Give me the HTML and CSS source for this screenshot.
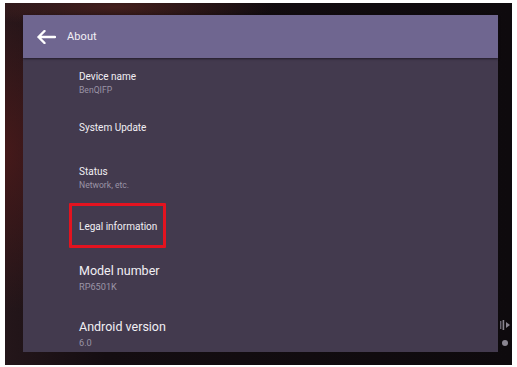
FILE: index.html
```html
<!DOCTYPE html>
<html>
<head>
<meta charset="utf-8">
<link rel="stylesheet" href="styles.css">
</head>
<body>
<div class="bezel">
  <div class="screen">
    <header class="appbar">
      <svg class="back" width="20" height="14" viewBox="0 0 20 14">
        <path d="M19 7H2.5M8.5 1L2.5 7l6 6" fill="none" stroke="#fff" stroke-width="2.4" stroke-linecap="round" stroke-linejoin="round"/>
      </svg>
      <span class="appbar-title">About</span>
    </header>
    <ul class="list">
      <li class="item item-device">
        <div class="title">Device name</div>
        <div class="sub">BenQIFP</div>
      </li>
      <li class="item item-update">
        <div class="title">System Update</div>
      </li>
      <li class="item item-status">
        <div class="title">Status</div>
        <div class="sub">Network, etc.</div>
      </li>
      <li class="item item-legal">
        <div class="title">Legal information</div>
        <span class="highlight"></span>
      </li>
      <li class="item item-model big">
        <div class="title">Model number</div>
        <div class="sub">RP6501K</div>
      </li>
      <li class="item item-android big">
        <div class="title">Android version</div>
        <div class="sub">6.0</div>
      </li>
    </ul>
  </div>
  <span class="side-ctrl">
    <svg width="10" height="12" viewBox="0 0 10 12">
      <rect x="0" y="2" width="1.4" height="8" fill="#6d6873"/>
      <rect x="2.6" y="1" width="1.6" height="10" fill="#8a8590"/>
      <path d="M6 3l4 3-4 3z" fill="#8a8590"/>
    </svg>
  </span>
  <span class="side-dot"></span>
</div>
</body>
</html>
```

FILE: styles.css
```css
* { box-sizing: border-box; }
html, body { margin: 0; padding: 0; }
body {
  background: #ffffff;
  width: 517px;
  height: 367px;
  overflow: hidden;
  font-family: Roboto, "Noto Sans", "Liberation Sans", sans-serif;
}
.bezel {
  position: relative;
  margin: 3px 5px 0 5px;
  height: 362px;
  padding: 12px 14px 13px 18px;
  background:
    radial-gradient(ellipse 90px 160px at 0px 150px, rgba(80, 26, 26, 0.75), rgba(80, 26, 26, 0) 100%),
    radial-gradient(ellipse 160px 20px at 110px 4px, rgba(90, 40, 35, 0.7), rgba(90, 40, 35, 0) 100%),
    linear-gradient(90deg, #24161a 0%, #140d11 20%, #0e0a0d 100%);
}
.screen {
  width: 475px;
  height: 337px;
  background: #433a4e;
  display: flex;
  flex-direction: column;
}
.appbar {
  height: 43px;
  background: #6f6690;
  display: flex;
  align-items: center;
  padding-left: 13px;
  box-shadow: 0 1px 2px rgba(20, 14, 26, 0.7);
  flex: none;
}
.back { display: block; margin-right: 11px; }
.appbar-title {
  color: #f2f0f6;
  font-size: 11px;
  letter-spacing: 0.1px;
}
.list {
  list-style: none;
  margin: 0;
  padding: 0 0 0 56px;
}
.item { position: relative; }
.title {
  color: #f1eff4;
  font-size: 10px;
  line-height: 13px;
}
.sub {
  color: #9b94a6;
  font-size: 8.6px;
  line-height: 10px;
  margin-top: 2px;
}
.big .title { font-size: 12.5px; line-height: 15px; }
.big .sub { font-size: 9.2px; line-height: 11px; margin-top: 3px; }
.item-device { margin-top: 12px; }
.item-update { margin-top: 26px; }
.item-status { margin-top: 31px; }
.item-legal { margin-top: 30px; }
.item-model { margin-top: 30px; }
.item-android { margin-top: 27px; }
.highlight {
  position: absolute;
  left: -10px;
  top: -17px;
  width: 97px;
  height: 45px;
  border: 3px solid #e3131f;
  border-radius: 1px;
}
.side-ctrl {
  position: absolute;
  left: 495px;
  top: 316px;
}
.side-ctrl svg { display: block; }
.side-dot {
  position: absolute;
  left: 497px;
  top: 337px;
  width: 6px;
  height: 6px;
  border-radius: 50%;
  background: #8a8590;
}
```
